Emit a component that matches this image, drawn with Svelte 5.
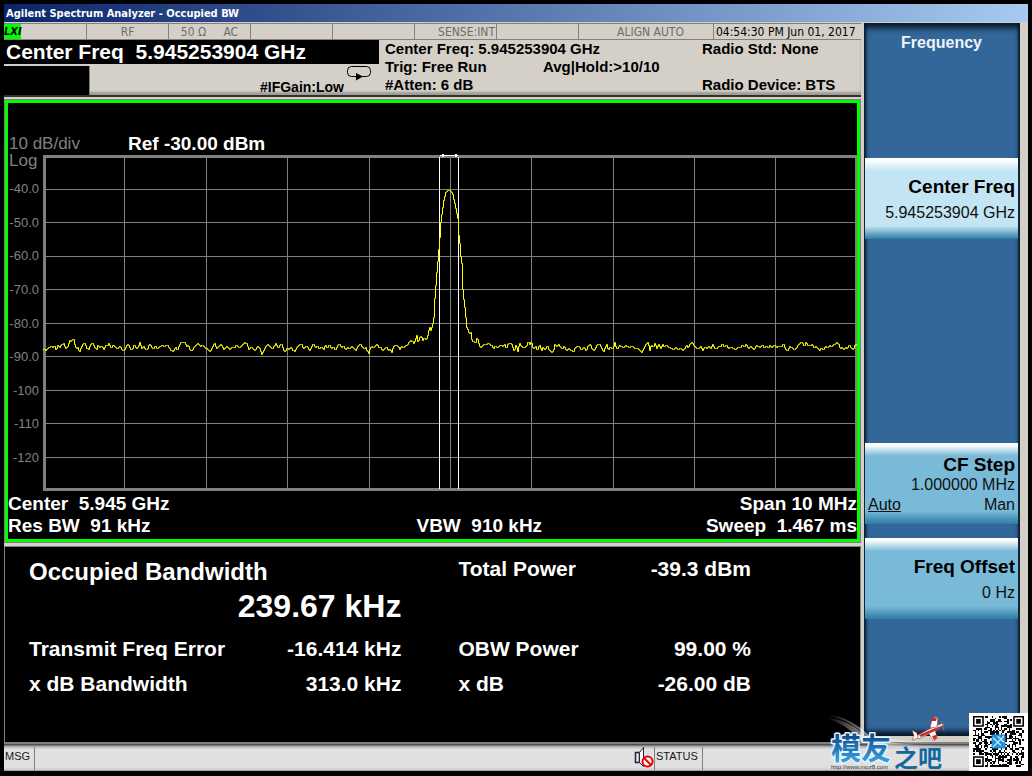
<script>
  const channels = [
    { text: '', tag: 'LXI' },
    { text: 'RF' },
    { text: '50 Ω     AC' },
    { text: '' },
    { text: '' },
    { text: 'SENSE:INT', end: true },
    { text: '' },
    { text: 'ALIGN AUTO', late: true },
    { text: '04:54:30 PM Jun 01, 2017', time: true }
  ];

  const levels = ['-40.0', '-50.0', '-60.0', '-70.0', '-80.0', '-90.0', '-100', '-110', '-120'];
  const gridX = [81, 163, 244, 326, 407, 488, 570, 651, 732];
  const gridY = [34, 67, 101, 134, 168, 201, 235, 268, 302];

  // Sweep segments: raw x,y samples at three samples per plot unit.
  const noiseLeft =
    '130,748 135,752 140,745 148,742 152,738 156,743 162,738 166,750 172,732 176,745 182,733 190,731 194,745 202,737 206,722 211,725 216,718 220,720 223,738 227,748 231,742 236,757 241,742 248,731 253,730 258,745 264,748 270,733 275,727 282,742 288,748 292,732 296,744 303,738 309,749 314,737 320,738 325,730 331,745 337,733 343,739 350,747 358,738 364,750 370,752 376,740 382,731 388,746 394,750 400,732 406,745 412,742 417,727 423,744 429,738 434,748 440,747 446,732 452,740 458,748 463,738 470,748 476,741 484,735 490,742 496,737 502,738 510,752 518,754 524,740 530,752 536,734 540,728 548,727 553,726 557,740 563,735 568,752 574,751 580,742 586,735 592,730 600,738 606,736 614,744 620,747 628,754 636,738 642,731 648,745 654,740 662,733 668,748 674,742 680,740 688,748 694,742 700,744 706,735 712,742 718,741 726,732 732,728 738,730 744,747 752,740 758,748 764,752 770,738 778,748 783,763 790,748 796,738 801,733 808,740 814,748 820,738 826,730 832,745 838,735 844,732 848,750 853,757 858,745 864,748 870,743 876,750 882,755 888,743 896,733 902,732 908,748 914,738 920,742 926,752 932,740 938,730 944,744 950,738 956,748 962,740 968,750 974,736 980,744 986,733 992,747 998,742 1004,752 1010,738 1016,730 1022,743 1028,738 1034,750 1040,742 1046,748 1052,738 1058,744 1064,752 1070,740 1076,735';
  const peak =
    '0,613 5,622 10,628 14,620 18,630 24,640 28,626 34,620 38,625 44,618 49,612 54,621 60,622 66,632 72,625 78,622 83,634 88,627 93,637 97,622 103,617 110,618 117,628 122,620 128,622 134,618 140,616 145,605 150,601 155,605 160,610 164,598 168,587 172,610 176,594 182,588 187,606 190,592 195,598 200,592 204,570 208,562 211,578 214,556 217,550 219,532 221,490 224,450 227,408 230,376 233,338 236,305 238,280 240,248 244,214 249,182 254,160 260,153 266,151 271,154 275,160 279,178 284,200 288,220 292,240 294,285 298,318 300,348 304,378 306,448 309,478 312,502 315,532 318,562 322,572 326,580 330,577 334,605 340,604 344,610 349,592 354,610 358,622 364,620 370,612 376,614 382,610 388,614 394,618 398,626 404,618 410,624 416,618 422,614 428,620 432,612 436,626 442,612 448,610 454,614 457,628 461,632 466,614 471,633 476,610 482,618 490,624 496,620 502,605 507,612 512,607 516,622 520,628 524,618 530,632 536,612 542,634 546,622 552,628 560,618 566,632 572,637 578,632 582,614 588,620 594,614 600,622 604,628 610,618 616,632 622,626 630,630 638,637 644,622 650,618 656,622 662,630 670,622 676,632 682,618 688,612 694,628 700,632 706,620 712,612 718,612';
  const noiseRight =
    '0,80 5,90 9,94 13,82 18,72 22,90 28,82 34,88 38,84 42,66 46,84 50,88 56,76 62,80 68,84 74,76 80,80 86,84 92,78 98,82 104,86 110,84 116,90 124,97 130,84 136,72 142,67 147,90 152,74 158,84 162,70 168,84 174,72 180,84 186,72 190,82 196,74 204,82 212,86 220,90 224,80 232,90 240,84 246,90 252,84 258,76 262,84 268,72 274,67 280,78 286,84 294,86 300,80 306,90 312,82 318,84 324,78 330,86 336,72 342,86 348,84 354,78 360,80 364,70 370,82 376,74 382,86 390,82 396,84 404,88 412,82 418,84 424,76 430,82 436,72 442,86 448,80 454,82 460,90 466,76 472,80 478,82 484,74 490,84 496,78 502,84 508,76 514,84 520,74 526,82 534,78 542,80 548,72 554,88 560,94 566,80 574,84 580,88 586,86 592,76 598,70 604,66 610,80 616,66 622,78 628,76 634,74 640,84 646,78 650,84 656,92 662,84 668,90 674,80 680,84 686,76 692,80 700,74 708,66 714,74 718,86 724,80 728,90 734,82 740,86 746,74 752,86 758,90 764,72 770,80';

  const place = (raw, dx, dy) =>
    raw.split(' ').map((pair) => {
      const [x, y] = pair.split(',').map(Number);
      return [x / 3 + dx, y / 3 + dy];
    });
  const samples = [
    ...place(noiseLeft, -43, -55),
    ...place(peak, 317, -15),
    ...place(noiseRight, 557, 165)
  ];

  // One level per column, drawn as a stepped line.
  let trace = '';
  let at = 0;
  for (let x = 0; x < 814; x++) {
    while (at < samples.length - 2 && samples[at + 1][0] < x) at++;
    const [x0, y0] = samples[at];
    const [x1, y1] = samples[at + 1];
    const t = Math.max(0, Math.min(1, (x - x0) / (x1 - x0 || 1)));
    const y = Math.floor(y0 + (y1 - y0) * t) + 0.5;
    trace += x === 0 ? `M0 ${y}` : `H${x + 0.5}V${y}`;
  }

  // QR symbol: three finder squares and a scattered data field.
  const size = 33;
  const finders = [[0, 0], [size - 7, 0], [0, size - 7]];
  let seed = 97;
  const next = () => (seed = (seed * 16807) % 2147483647) / 2147483647;
  let modules = '';
  for (let y = 0; y < size; y++) {
    for (let x = 0; x < size; x++) {
      const dark = next() > 0.48;
      const inFinder = finders.some(([fx, fy]) => x >= fx - 1 && x <= fx + 7 && y >= fy - 1 && y <= fy + 7);
      const inLogo = x > 11 && x < 21 && y > 11 && y < 21;
      if (dark && !inFinder && !inLogo) modules += `M${x} ${y}h1v1h-1z`;
    }
  }
</script>

<div class="window">
  <header class="title">Agilent Spectrum Analyzer - Occupied BW</header>
  <div class="body">
    <main>
      <div class="channels">
        {#each channels as c}
          <span class:time={c.time} class:end={c.end} class:late={c.late}>{#if c.tag}<b class="lxi">{c.tag}</b>{/if}{c.text}</span>
        {/each}
      </div>

      <section class="info">
        <div class="active">
          <div class="readout">Center Freq  5.945253904 GHz</div>
          <div class="gain">
            <div class="blank"></div>
            <span>#IFGain:Low</span>
            <svg width="26" height="16" viewBox="0 0 26 16" aria-hidden="true">
              <rect x="1.500" y="0.500" width="23" height="10" rx="4" fill="none" stroke="#000" />
              <path d="M10 7 L17 10.500 L10 14.500z" />
            </svg>
          </div>
        </div>
        <div class="setup">
          <span class="wide">Center Freq: 5.945253904 GHz</span><span>Radio Std: None</span>
          <span>Trig: Free Run</span><span>Avg|Hold:&gt;10/10</span><span></span>
          <span class="wide">#Atten: 6 dB</span><span>Radio Device: BTS</span>
        </div>
      </section>

      <section class="graph">
        <div class="scale"><span>10 dB/div</span><strong>Ref -30.00 dBm</strong></div>
        <div class="plot">
          <div class="axis">
            <span class="log">Log</span>
            {#each levels as l}<span>{l}</span>{/each}
          </div>
          <svg viewBox="0 0 814 336" preserveAspectRatio="none" role="img" aria-label="Spectrum trace">
            <g fill="#808080" shape-rendering="crispEdges">
              {#each gridX as x}<rect {x} y="0" width="1" height="336" />{/each}
              {#each gridY as y}<rect x="0" {y} width="814" height="1" />{/each}
              <rect width="814" height="3" />
              <rect y="333" width="814" height="3" />
              <rect width="3" height="336" />
              <rect x="812" width="2" height="336" />
            </g>
            <g fill="#fff" shape-rendering="crispEdges">
              <rect x="396" y="2" width="1" height="332" />
              <rect x="415" y="2" width="1" height="332" />
              <rect x="397" y="0" width="18" height="1" />
              <rect x="399" y="-1" width="2" height="3" />
              <rect x="412" y="-1" width="2" height="3" />
            </g>
            <path d={trace} fill="none" stroke="#ffff00" stroke-width="1" />
          </svg>
        </div>
        <div class="sweep">
          <span>Center  5.945 GHz</span><span></span><span>Span 10 MHz</span>
          <span>Res BW  91 kHz</span><span>VBW  910 kHz</span><span>Sweep  1.467 ms</span>
        </div>
      </section>

      <section class="results">
        <dl>
          <div><dt class="head">Occupied Bandwidth</dt></div>
          <div class="big"><dd>239.67 kHz</dd></div>
          <div><dt>Transmit Freq Error</dt><dd>-16.414 kHz</dd></div>
          <div><dt>x dB Bandwidth</dt><dd>313.0 kHz</dd></div>
        </dl>
        <dl>
          <div class="power"><dt>Total Power</dt><dd>-39.3 dBm</dd></div>
          <div class="big"></div>
          <div><dt>OBW Power</dt><dd>99.00 %</dd></div>
          <div><dt>x dB</dt><dd>-26.00 dB</dd></div>
        </dl>
      </section>
    </main>

    <nav class="menu" aria-label="Frequency">
      <h2>Frequency</h2>
      <button class="selected"><b>Center Freq</b><span>5.945253904 GHz</span></button>
      <button class="step"><b>CF Step</b><span>1.000000 MHz</span><span class="choice"><u>Auto</u><span>Man</span></span></button>
      <button class="offset"><b>Freq Offset</b><span>0 Hz</span></button>
    </nav>
  </div>

  <footer>
    <span class="msg">MSG</span>
    <svg width="20" height="22" viewBox="0 0 20 22" aria-hidden="true">
      <path d="M1.500 5.500h4v10h-4z" fill="#e4e4e4" stroke="#223" stroke-width="1.500" />
      <path d="M5.500 5.500l4-5v19l-4-4z" fill="#fff" stroke="#223" />
      <circle cx="13.500" cy="14.500" r="5" fill="#fff" stroke="#f00000" stroke-width="2" />
      <path d="M10 11l7 7" stroke="#f00000" stroke-width="2" />
    </svg>
    <span class="status">STATUS</span>
  </footer>

  <svg class="brand" width="204" height="64" viewBox="0 0 204 64" role="img" aria-label="模友之吧">
    <defs>
      <linearGradient id="ink" x1="0" y1="0" x2="0" y2="1">
        <stop offset="0.200" stop-color="#0a4488" />
        <stop offset="0.900" stop-color="#3ea6e6" />
      </linearGradient>
      <linearGradient id="trail" x1="0" y1="0" x2="1" y2="0">
        <stop offset="0" stop-color="#fff" stop-opacity="0" />
        <stop offset="0.350" stop-color="#fff" stop-opacity="0.600" />
        <stop offset="1" stop-color="#fff" stop-opacity="0" />
      </linearGradient>
    </defs>
    <path d="M2 5Q24 6 42 23Q66 33 122 32Q60 41 34 25Q20 10 2 5z" fill="url(#trail)" />
    <path d="M6 2Q30 8 44 23Q70 30 116 29" fill="none" stroke="url(#trail)" stroke-width="2" />
    <g font-family="'Noto Sans CJK SC', sans-serif" font-weight="700">
      <text x="7" y="46" font-size="30" fill="url(#ink)" stroke="#e4f5ff" stroke-width="3" stroke-linejoin="round" paint-order="stroke">模友</text>
      <text x="70" y="54" font-size="24" fill="#14669f">之吧</text>
    </g>
    <text x="7" y="56" font-family="'Liberation Sans', sans-serif" font-size="6" fill="#333">http://www.moz8.com</text>
    <g stroke="#8b2220" stroke-width="0.500">
      <path d="M92 23l17-9 10-4 1 2-7 5-18 9z" fill="#f3eeee" />
      <path d="M106 15l2-9q2-4 6-1l-1 9zM104 19l7-3 2 9q-2 4-5 1z" fill="#fff" />
      <path d="M88 17l5 3 1 5-5 2-1 0 2-4z" fill="#f8f8f8" />
    </g>
    <path d="M95 22l14-6 11-4-9 6-14 6zM107 8l2-4 4 1-1 3zM108 23l4-1 1 3-3 2z" fill="#cb2b26" />
    <path d="M118 8l2 10" stroke="#777" />
    <rect x="145" y="0" width="59" height="58" fill="#fff" />
    <svg x="149" y="3" width="51" height="51" viewBox="0 0 33 33">
      <path d={modules} fill="#000" shape-rendering="crispEdges" />
      {#each finders as [x, y]}
        <path d="M{x} {y}h7v7h-7zM{x + 1} {y + 1}v5h5v-5zM{x + 2} {y + 2}h3v3h-3z" fill="#000" />
      {/each}
      <rect x="12" y="12" width="9" height="9" rx="1" fill="#2291de" />
      <path d="M13 14l5 5M16 13l4 4M13 20l7-7" stroke="#d8f2ff" stroke-width="0.800" />
    </svg>
  </svg>
</div>

<style>
  :global(body) {
    background: #000;
    font-family: 'Liberation Sans', Arial, sans-serif;
  }
  .window {
    position: relative;
    display: flex;
    flex-direction: column;
    box-sizing: border-box;
    min-height: 100vh;
    padding: 4px 4px 5px;
  }
  .readout,
  .channels > span,
  .setup span,
  .sweep span,
  strong,
  dt,
  dd {
    white-space: pre;
  }
  .title {
    height: 18px;
    padding-left: 2px;
    background: linear-gradient(90deg, #0a246a, #a6caf0);
    color: #fff;
    font: bold 11px/19px 'DejaVu Sans Condensed', 'DejaVu Sans', sans-serif;
  }
  .body {
    display: flex;
    flex: 1;
    padding: 1px 8px 0 0;
    background: #d4d0c8;
  }
  main {
    display: flex;
    flex: 1;
    flex-direction: column;
    min-width: 0;
  }
  .channels {
    display: grid;
    grid-template-columns: 83fr repeat(6, 82fr) 135fr 147fr;
    height: 15px;
    border: solid #808080;
    border-width: 1px 0;
    color: #6c6c6c;
    font-family: 'DejaVu Sans Condensed', 'DejaVu Sans', sans-serif;
    font-size: 12px;
    line-height: 16px;
    text-align: center;
  }
  .channels > span {
    overflow: hidden;
    border-right: 1px solid #808080;
  }
  .channels > .end {
    padding-right: 1px;
    text-align: right;
  }
  .channels > .late {
    padding-left: 9px;
  }
  .channels > .time {
    padding-left: 2px;
    border: 0;
    color: #000;
    text-align: left;
  }
  .lxi {
    display: block;
    width: 17px;
    background: #00ff00;
    color: #000;
    font-size: 11px;
    font-style: italic;
  }
  .info {
    display: grid;
    grid-template-columns: minmax(0, 375fr) minmax(0, 482fr);
    height: 55px;
    border-bottom: 2px solid #303030;
    box-shadow: inset 0 -3px 2px #a09e98;
    font-size: 15px;
    font-weight: 700;
  }
  .readout {
    height: 24px;
    padding-left: 2px;
    background: #000;
    color: #fff;
    font-size: 21px;
    line-height: 24px;
  }
  .gain {
    display: flex;
    height: 29px;
    margin-top: 2px;
    font-size: 14px;
  }
  .gain span {
    margin: 12px 2px 0 auto;
    line-height: 18px;
  }
  .gain svg {
    margin-right: 7px;
  }
  .blank {
    width: 85px;
    border-right: 1px solid #808080;
    background: #000;
  }
  .setup {
    display: grid;
    grid-template-columns: 158fr 159fr 159fr;
    grid-auto-rows: 18px;
    padding-left: 6px;
    line-height: 18px;
  }
  .wide {
    grid-column: span 2;
  }
  .graph {
    margin: 3px 1px 0;
    border: 3px solid #00ff00;
    outline: 1px solid #808080;
    background: #000;
    color: #fff;
    font-size: 19px;
    font-weight: 700;
  }
  .scale {
    display: flex;
    padding: 30px 0 0 1px;
    line-height: 22px;
  }
  .scale span {
    width: 119px;
    color: #808080;
    font-size: 17px;
    font-weight: 400;
  }
  .plot {
    display: flex;
    color: #808080;
  }
  .plot svg {
    flex: 1;
    min-width: 0;
    height: 336px;
    overflow: visible;
  }
  .axis {
    display: flex;
    flex-direction: column;
    width: 31px;
    padding: 0 4px 17px 0;
    font-size: 13px;
    font-weight: 400;
  }
  .axis span {
    display: flex;
    flex: 1;
    align-items: center;
    justify-content: flex-end;
  }
  .axis .log {
    flex: none;
    height: 17px;
    align-items: flex-start;
    justify-content: flex-start;
    padding-left: 1px;
    font-size: 17px;
    line-height: 12px;
  }
  .sweep {
    display: grid;
    grid-template-columns: 408fr 220fr 220fr;
    grid-auto-rows: 22px;
    padding: 2px 0;
    line-height: 22px;
  }
  .sweep span:nth-child(3n) {
    text-align: right;
  }
  .results {
    display: grid;
    flex: 1;
    grid-template-columns: 373fr 293fr;
    align-content: start;
    column-gap: 57px;
    margin-top: 4px;
    padding: 7px 109px 8px 24px;
    border: solid #808080;
    border-width: 1px 1px 0;
    background: #000;
    color: #fff;
    font-size: 21px;
    font-weight: 700;
    line-height: 35px;
  }
  dl,
  dd {
    margin: 0;
  }
  dl > div {
    display: flex;
    justify-content: space-between;
    height: 35px;
  }
  .head {
    font-size: 24px;
  }
  dl > .big {
    justify-content: flex-end;
    height: 42px;
    font-size: 32px;
  }
  .power {
    line-height: 30px;
  }
  .menu {
    display: grid;
    grid-template-columns: 1fr;
    grid-template-rows: 135px repeat(5, 95px);
    width: 153px;
    margin: 0 0 6px 3px;
    padding: 0 2px 0 1px;
    background: #336699;
    box-shadow: inset 0 7px 6px -2px #061828, inset 3px 0 2px -1px #10283c, inset -2px 0 1px #10283c, inset 0 -5px 5px #061828;
  }
  h2 {
    margin: 0;
    padding-top: 10px;
    color: #eef4fa;
    font-size: 16px;
    line-height: 20px;
    text-align: center;
  }
  button {
    display: flex;
    flex-direction: column;
    align-items: flex-end;
    height: 81px;
    padding: 18px 3px 0;
    border: 0;
    background: linear-gradient(#fff 0, #fff 2px, #79bad8 13px, #79bad8 68px, #2c7ca4 100%);
    color: #101010;
    font: 16px/20px 'Liberation Sans', Arial, sans-serif;
  }
  button b {
    color: #000;
    font-size: 19px;
    line-height: 22px;
  }
  button b + span {
    margin-top: 5px;
  }
  .selected {
    background: linear-gradient(#fff 0, #fff 2px, #c3e5f3 13px, #c3e5f3 68px, #2c7ca4 100%);
  }
  .step {
    grid-row: 5;
    padding-top: 12px;
  }
  .step b {
    line-height: 20px;
  }
  .step b + span {
    margin-top: 0;
  }
  .offset {
    grid-row: 6;
  }
  .choice {
    display: flex;
    justify-content: space-between;
    align-self: stretch;
  }
  footer {
    display: flex;
    height: 23px;
    padding: 3px 0 0 1px;
    border: solid #808080;
    border-width: 2px 0 1px;
    border-bottom-color: #a8a8a8;
    background: linear-gradient(#505050 0, #505050 1px, #a0a0a0 2px, #e0e0e0 5px, #e0e0e0 90%, #c8c8c8);
    color: #181818;
    font-size: 11px;
    line-height: 18px;
  }
  .msg {
    width: 29px;
    border-right: 1px solid #808080;
  }
  footer svg {
    margin-left: auto;
  }
  .status {
    width: 46px;
    margin-right: 325px;
    padding-left: 1px;
    border: solid #808080;
    border-width: 0 1px;
  }
  .brand {
    position: absolute;
    right: 4px;
    bottom: -1px;
  }
</style>
